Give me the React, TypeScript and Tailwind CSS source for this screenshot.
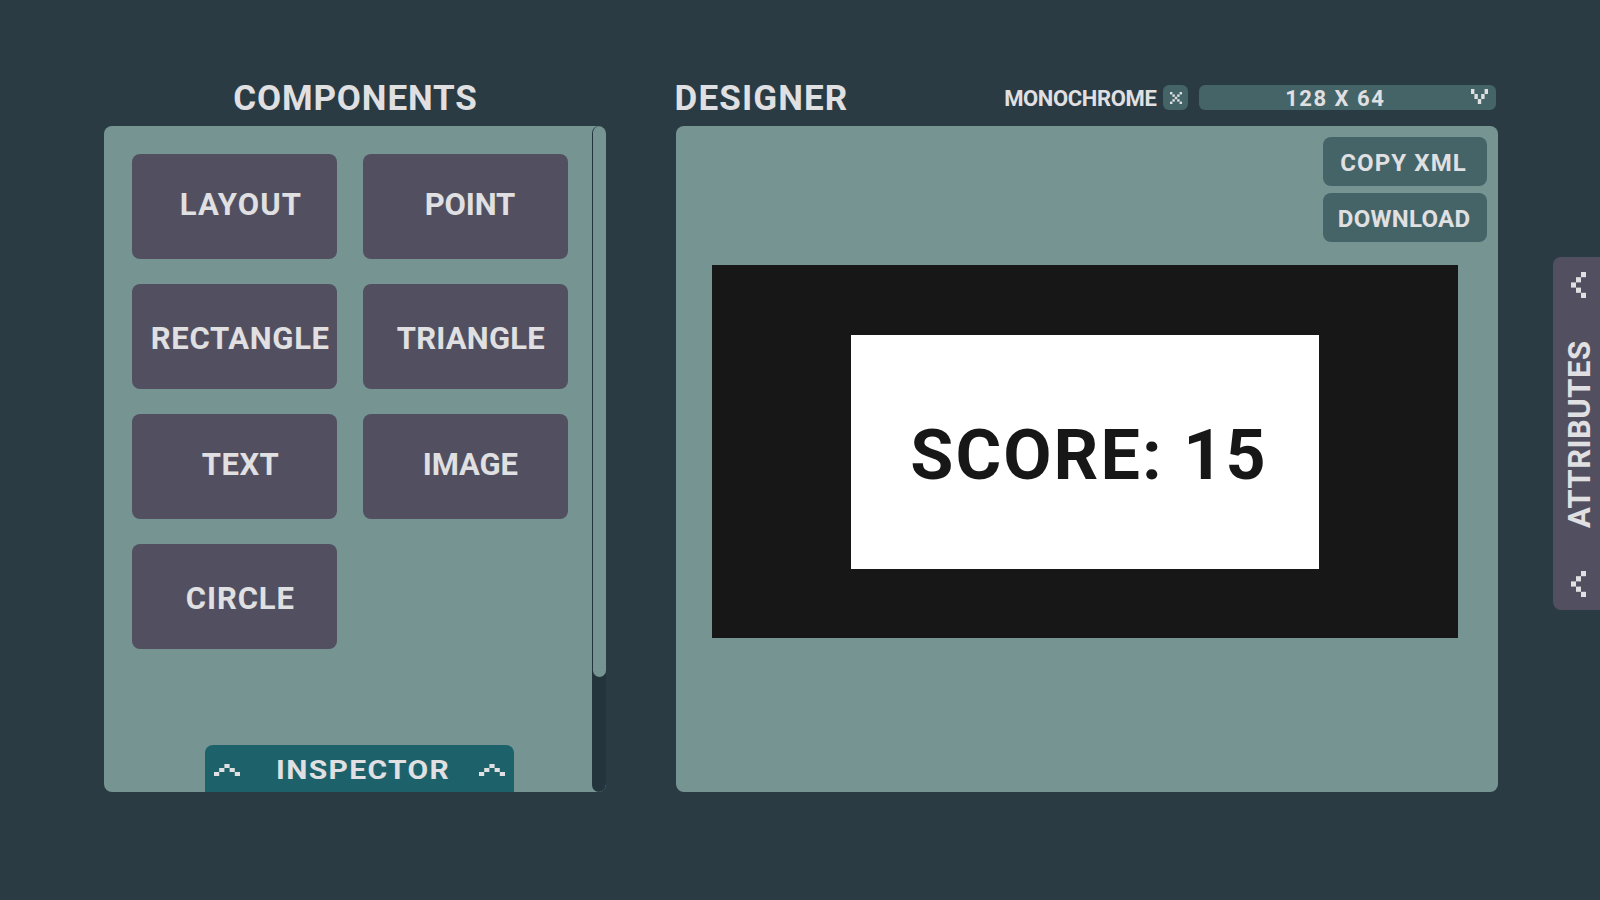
import { useLayoutEffect, useRef } from "react";
import clsx from "clsx";

/** One line of text whose tracking is adjusted until it spans `width` pixels. */
function Fit({ text, width, className }: { text: string; width: number; className?: string }) {
  const ref = useRef<HTMLSpanElement>(null);
  useLayoutEffect(() => {
    const el = ref.current;
    if (!el) return;
    el.style.letterSpacing = "0px";
    const size = parseFloat(getComputedStyle(el).fontSize);
    const bearings = size * 0.08;
    const spacing = (width - el.offsetWidth + bearings) / (text.length - 1);
    el.style.letterSpacing = `${spacing}px`;
    el.style.marginRight = `${-spacing - bearings / 2}px`;
    el.style.marginLeft = `${-bearings / 2}px`;
  }, [text, width]);
  return (
    <span ref={ref} className={clsx("inline-block whitespace-pre", className)}>
      {text}
    </span>
  );
}

/** Small bitmap icon; every "#" is a filled cell. */
function Bitmap({ rows, className }: { rows: string[]; className: string }) {
  return (
    <svg
      className={clsx("shrink-0", className)}
      viewBox={`0 0 ${rows[0].length} ${rows.length}`}
      preserveAspectRatio="none"
      fill="currentColor"
    >
      {rows.flatMap((row, y) =>
        [...row].map((c, x) => (c === "#" ? <rect key={`${x}-${y}`} x={x} y={y} width="1" height="1" /> : null)),
      )}
    </svg>
  );
}

const UP = ["..#..", ".#.#.", "#...#"];
const LEFT = ["..#", ".#.", "#..", ".#.", "..#"];
const CROSS = ["#...#", ".#.#.", "..#..", ".#.#.", "#...#"];
const DOWN = ["#...#", ".#.#.", "..#.."];

const components = [
  { name: "LAYOUT", width: 119, pad: "pl-[49px] pt-[35px]" },
  { name: "POINT", width: 88, pad: "pl-[63px] pt-[35px]" },
  { name: "RECTANGLE", width: 176, pad: "pl-5 pt-[39px]" },
  { name: "TRIANGLE", width: 145, pad: "pl-[35px] pt-[39px]" },
  { name: "TEXT", width: 75, pad: "pl-[71px] pt-[35px]" },
  { name: "IMAGE", width: 93, pad: "pl-[61px] pt-[35px]" },
  { name: "CIRCLE", width: 106, pad: "pl-[55px] pt-[39px]" },
];

function ComponentsPanel() {
  return (
    <section className="w-[502px]">
      <h1 className="flex h-[41px] justify-center pt-px">
        <Fit text="COMPONENTS" width={241} className="text-[35px] leading-[25px]" />
      </h1>
      <div className="flex h-[666px] overflow-hidden rounded-lg bg-[#769592]">
        <div className="flex w-[488px] flex-col justify-between">
          <div className="grid grid-cols-[205px_205px] gap-x-[26px] gap-y-[25px] pt-7 pl-7">
            {components.map((c) => (
              <button
                key={c.name}
                className={clsx("flex h-[105px] items-start rounded-lg bg-[#525060] text-[31px] leading-[32px]", c.pad)}
              >
                <Fit text={c.name} width={c.width} />
              </button>
            ))}
          </div>
          <button className="ml-[101px] flex h-[47px] w-[309px] items-center justify-between rounded-t-lg bg-[#1d626a] px-[9px] pt-0.5">
            <Bitmap rows={UP} className="h-3 w-[26px]" />
            <span className="flex scale-x-120 pt-0.5 pl-1">
              <Fit text="INSPECTOR" width={142} className="text-[25px] leading-[24px]" />
            </span>
            <Bitmap rows={UP} className="h-3 w-[26px]" />
          </button>
        </div>
        <div className="flex w-[14px] justify-end rounded-full bg-[#23343c]">
          <div className="h-[551px] w-[13px] rounded-full bg-[#769592]" />
        </div>
      </div>
    </section>
  );
}

function DesignerPanel() {
  return (
    <section className="ml-[70px] w-[822px]">
      <div className="flex h-[41px] items-start">
        <h1 className="flex w-[329px] pt-px">
          <Fit text="DESIGNER" width={170} className="text-[35px] leading-[25px]" />
        </h1>
        <label className="flex w-[158px] pt-px text-[22px] leading-[26px]">
          <Fit text="MONOCHROME" width={151} />
        </label>
        <button className="mr-[11px] flex h-[25px] w-[25px] items-center justify-center rounded-md bg-[#446468] pt-px">
          <Bitmap rows={CROSS} className="h-3 w-3" />
        </button>
        <div className="flex h-[25px] w-[297px] justify-between rounded-md bg-[#446468] pr-2 pl-[87px]">
          <Fit text="128 X 64" width={97} className="pt-px text-[22px] leading-[26px]" />
          <Bitmap rows={DOWN} className="mt-1 h-[15px] w-[17px]" />
        </div>
      </div>
      <div className="flex h-[666px] flex-col rounded-lg bg-[#769592]">
        <div className="flex h-[139px] flex-col items-end gap-[7px] pt-[11px] pr-[11px]">
          <button className="flex h-[49px] w-[164px] items-center justify-center rounded-lg bg-[#446468] pt-0.5 pr-1">
            <Fit text="COPY XML" width={124} className="text-[24px] leading-[24px]" />
          </button>
          <button className="flex h-[49px] w-[164px] items-center justify-center rounded-lg bg-[#446468] pt-0.5 pr-0.5">
            <Fit text="DOWNLOAD" width={130} className="text-[24px] leading-[24px]" />
          </button>
        </div>
        <div className="ml-9 flex h-[373px] w-[746px] justify-center bg-[#171717] pt-[70px]">
          <div className="flex h-[234px] w-[468px] items-start bg-white pt-[85px] pl-[62px] text-[70px] leading-[70px] text-[#171717]">
            <Fit text="SCORE: 15" width={350} />
          </div>
        </div>
      </div>
    </section>
  );
}

function AttributesTab() {
  return (
    <button className="mt-[257px] ml-[55px] flex h-[353px] w-[47px] flex-col items-center justify-between rounded-l-lg bg-[#525060] pt-[15px] pb-[13px] pl-[3px]">
      <Bitmap rows={LEFT} className="h-[26px] w-[15px]" />
      <span className="flex h-[185px] w-[30px] rotate-180 items-start justify-center pr-1 text-[31px] leading-[30px] tracking-[0.5px] whitespace-nowrap [writing-mode:vertical-rl]">
        <span className="-mr-0.5">ATTRIBUTES</span>
      </span>
      <Bitmap rows={LEFT} className="h-[26px] w-[15px]" />
    </button>
  );
}

export default function App() {
  return (
    <main className="flex h-[900px] w-[1600px] overflow-hidden bg-[#2a3b43] pl-[104px] font-['Roboto',sans-serif] font-bold text-[#e0e0e2]">
      <div className="flex pt-[85px]">
        <ComponentsPanel />
        <DesignerPanel />
      </div>
      <AttributesTab />
    </main>
  );
}
